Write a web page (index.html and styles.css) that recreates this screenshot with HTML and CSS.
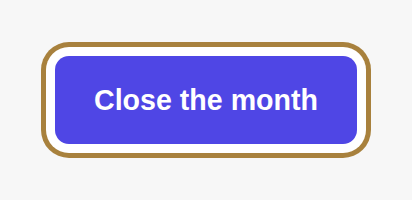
FILE: index.html
```html
<!DOCTYPE html>
<html>
    <head>
        <meta charset="utf-8">
        <title>Close the month</title>
        <link rel="stylesheet" href="styles.css">
    </head>
    <body>
        <div class="stage">
            <button type="button" class="closeButton">Close the month</button>
        </div>
    </body>
</html>
```

FILE: styles.css
```css
body {
    margin: 0;
    background: #f7f7f7;
}
.stage {
    height: 200px;
    display: flex;
    align-items: center;
    justify-content: center;
}
.closeButton {
    width: 302px;
    height: 88px;
    padding: 0;
    border: none;
    border-radius: 14px;
    background: #4f46e5;
    color: #ffffff;
    font-family: "Liberation Sans", Arial, sans-serif;
    font-size: 28.6px;
    font-weight: bold;
    box-shadow: 0 0 0 9px #ffffff, 0 0 0 14px #a8813d;
    cursor: pointer;
}
```
